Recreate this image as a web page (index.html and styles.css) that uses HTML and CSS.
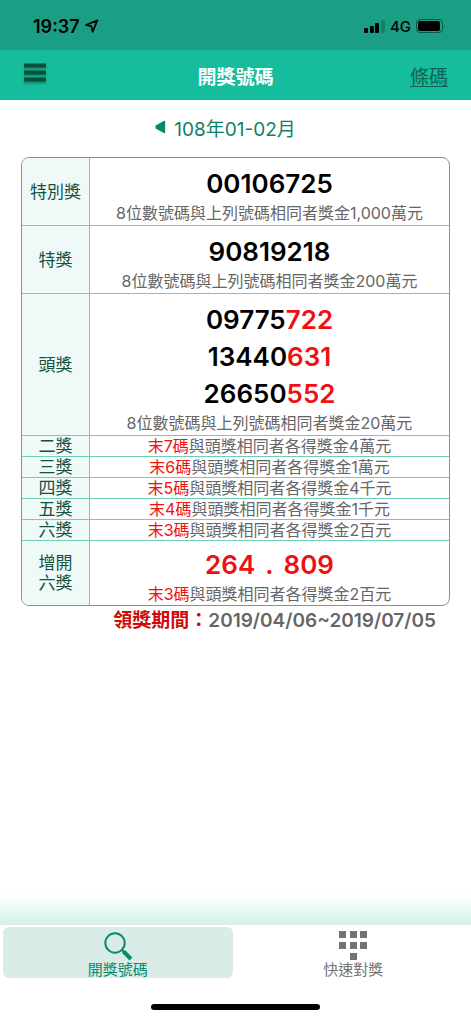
FILE: index.html
```html
<!DOCTYPE html>
<html lang="zh-Hant">
<head>
  <meta charset="UTF-8" />
  <meta name="viewport" content="width=device-width, initial-scale=1.0"/>
  <title>開獎號碼</title>
  <link rel="stylesheet" href="styles.css">
</head>
<body>

  <div class="status-bar">
    <div class="status-left">
      <span class="clock">19:37</span>
      <svg class="location-icon" width="14" height="14" viewBox="0 0 14 14">
        <path d="M12.4 1.4 L1 6 L6.4 7.4 L7.6 12.8 Z" fill="none" stroke="#000" stroke-width="1.7" stroke-linejoin="round"/>
      </svg>
    </div>
    <div class="status-right">
      <svg width="21" height="13" viewBox="0 0 21 13">
        <rect x="0" y="8" width="4" height="5" rx="1"/>
        <rect x="6" y="6" width="4" height="7" rx="1"/>
        <rect x="11" y="3" width="4" height="10" rx="1"/>
        <rect x="17" y="0" width="4" height="13" rx="1" fill="#148068"/>
      </svg>
      <span class="network">4G</span>
      <svg width="30" height="14" viewBox="0 0 30 14">
        <rect x="0.5" y="0.5" width="26" height="13" rx="3.5" fill="none" stroke="#0b5948"/>
        <rect x="2" y="2" width="22" height="10" rx="2"/>
        <path d="M28 5 q1.6 2 0 4 Z" fill="#0b5948"/>
      </svg>
    </div>
  </div>

  <header class="nav-bar">
    <button type="button" class="menu-button" aria-label="選單">
      <svg width="24" height="22" viewBox="0 0 24 22">
        <path d="M1 3.5 H23 M1 10.5 H23 M1 17.5 H23" stroke="#07513a" stroke-width="4"/>
      </svg>
    </button>
    <h1>開獎號碼</h1>
    <a href="#" class="barcode-link">條碼</a>
  </header>

  <main>
    <div class="period">
      <button type="button" class="prev-button" aria-label="上一期">
        <svg width="11" height="14" viewBox="0 0 11 14">
          <path d="M9.2 1.8 V12.2 L1.5 7.8 V6.2 Z" fill="#078a6e" stroke="#078a6e" stroke-width="2" stroke-linejoin="round"/>
        </svg>
      </button>
      <span>108年01-02月</span>
    </div>

    <table class="prizes">
      <tr>
        <th scope="row">特別獎</th>
        <td class="tall">
          <p class="number">00106725</p>
          <p class="note">8位數號碼與上列號碼相同者獎金1,000萬元</p>
        </td>
      </tr>
      <tr>
        <th scope="row">特獎</th>
        <td class="tall">
          <p class="number">90819218</p>
          <p class="note">8位數號碼與上列號碼相同者獎金200萬元</p>
        </td>
      </tr>
      <tr>
        <th scope="row">頭獎</th>
        <td class="tall">
          <p class="number">09775<span class="red">722</span></p>
          <p class="number">13440<span class="red">631</span></p>
          <p class="number">26650<span class="red">552</span></p>
          <p class="note">8位數號碼與上列號碼相同者獎金20萬元</p>
        </td>
      </tr>
      <tr>
        <th scope="row">二獎</th>
        <td><p class="note"><span class="red">末7碼</span>與頭獎相同者各得獎金4萬元</p></td>
      </tr>
      <tr>
        <th scope="row">三獎</th>
        <td><p class="note"><span class="red">末6碼</span>與頭獎相同者各得獎金1萬元</p></td>
      </tr>
      <tr>
        <th scope="row">四獎</th>
        <td><p class="note"><span class="red">末5碼</span>與頭獎相同者各得獎金4千元</p></td>
      </tr>
      <tr>
        <th scope="row">五獎</th>
        <td><p class="note"><span class="red">末4碼</span>與頭獎相同者各得獎金1千元</p></td>
      </tr>
      <tr>
        <th scope="row">六獎</th>
        <td><p class="note"><span class="red">末3碼</span>與頭獎相同者各得獎金2百元</p></td>
      </tr>
      <tr>
        <th scope="row">增開<br>六獎</th>
        <td class="extra">
          <p class="number red">264<span class="dot">.</span>809</p>
          <p class="note"><span class="red">末3碼</span>與頭獎相同者各得獎金2百元</p>
        </td>
      </tr>
    </table>

    <p class="claim"><span class="claim-label">領獎期間：</span>2019/04/06~2019/07/05</p>
  </main>

  <div class="fade"></div>
  <nav class="tab-bar">
    <a href="#" class="tab active">
      <svg width="30" height="30" viewBox="0 0 30 30">
        <circle cx="12" cy="12" r="9.7" fill="none" stroke="#078a6e" stroke-width="2"/>
        <path d="M18.5 18.5 L21 21" stroke="#078a6e" stroke-width="2"/>
        <path d="M20.5 20.5 L28 28" stroke="#078a6e" stroke-width="4"/>
      </svg>
      <span>開獎號碼</span>
    </a>
    <a href="#" class="tab">
      <svg width="30" height="30" viewBox="0 0 30 30" fill="#737373">
        <path d="M1 0h7v7H1z M12 0h7v7h-7z M22 0h7v7h-7z M1 11h7v7H1z M12 11h7v7h-7z M22 11h7v7h-7z M12 22h7v7h-7z"/>
      </svg>
      <span>快速對獎</span>
    </a>
  </nav>
  <div class="home-area"><div class="home-indicator"></div></div>

</body>
</html>
```

FILE: styles.css
```css
* {
  margin: 0;
  padding: 0;
  box-sizing: border-box;
}

body {
  display: flex;
  flex-direction: column;
  min-height: 100vh;
  background: #fff;
  font-family: Inter, 'Noto Sans CJK TC', sans-serif;
}

button {
  border: none;
  background: none;
  cursor: pointer;
}

svg {
  display: block;
}

.status-bar {
  display: flex;
  justify-content: space-between;
  align-items: center;
  height: 50px;
  padding: 2px 25px 0 33px;
  background: #1a9f85;
}

.status-left,
.status-right {
  display: flex;
  align-items: center;
  gap: 5px;
}

.clock {
  font-size: 18px;
  font-weight: 600;
}

.network {
  font-size: 15px;
  font-weight: 500;
}

.nav-bar {
  display: grid;
  grid-template-columns: 1fr auto 1fr;
  align-items: center;
  height: 50px;
  padding: 0 23px;
  background: #16bd9c;
}

.menu-button {
  justify-self: start;
  padding-bottom: 4px;
  filter: drop-shadow(0 2px 1px rgba(0, 60, 40, 0.4));
}

h1 {
  color: #fff;
  font-size: 19px;
  font-weight: 700;
}

.barcode-link {
  justify-self: end;
  color: #0d6350;
  font-size: 19px;
  text-underline-offset: 2px;
}

main {
  flex: 1;
  padding: 13px 21px 0;
}

.period {
  display: flex;
  justify-content: center;
  align-items: center;
  gap: 8px;
  height: 28px;
  margin-bottom: 16px;
  padding-right: 20px;
  color: #0f8067;
  font-size: 19px;
}

.prizes {
  width: 100%;
  border: 1px solid #3fb59b;
  border-radius: 8px;
  border-spacing: 0;
  overflow: hidden;
}

.prizes th,
.prizes td {
  border-bottom: 1px solid #6fcdb8;
}

.prizes tr:last-child th,
.prizes tr:last-child td {
  border-bottom: none;
}

.prizes th {
  width: 68px;
  border-right: 1px solid #6fcdb8;
  background: #eff9f8;
  color: #15513f;
  font-size: 17px;
  font-weight: 400;
  line-height: 20px;
}

.prizes td {
  text-align: center;
}

.number {
  color: #000;
  font-size: 26px;
  font-weight: 600;
  line-height: 37px;
}

.note {
  color: #666;
  font-size: 16px;
  line-height: 20px;
}

.tall {
  padding-top: 7px;
}

.tall .note {
  line-height: 23px;
}

.extra {
  padding-top: 5px;
}

.extra .note {
  line-height: 22px;
}

.red {
  color: #f01010;
}

.dot {
  margin: 0 10px;
}

.claim {
  padding-right: 14px;
  color: #666;
  font-size: 19px;
  font-weight: 600;
  line-height: 30px;
  text-align: right;
}

.claim-label {
  color: #d00a0a;
}

.fade {
  height: 30px;
  background: linear-gradient(#fff, #d4f2eb);
}

.tab-bar {
  display: flex;
  gap: 6px;
  padding: 2px 3px 0;
  border-top: 1px solid #e2e6e5;
}

.tab {
  flex: 1;
  display: flex;
  flex-direction: column;
  align-items: center;
  height: 51px;
  padding-top: 4px;
  border-radius: 6px;
  color: #737373;
  font-size: 15px;
  line-height: 17px;
  text-decoration: none;
}

.tab.active {
  background: #d9ece7;
  color: #078a6e;
}

.home-area {
  display: flex;
  justify-content: center;
  padding: 26px 0 9px;
}

.home-indicator {
  width: 36%;
  height: 6px;
  border-radius: 3px;
  background: #000;
}
```
